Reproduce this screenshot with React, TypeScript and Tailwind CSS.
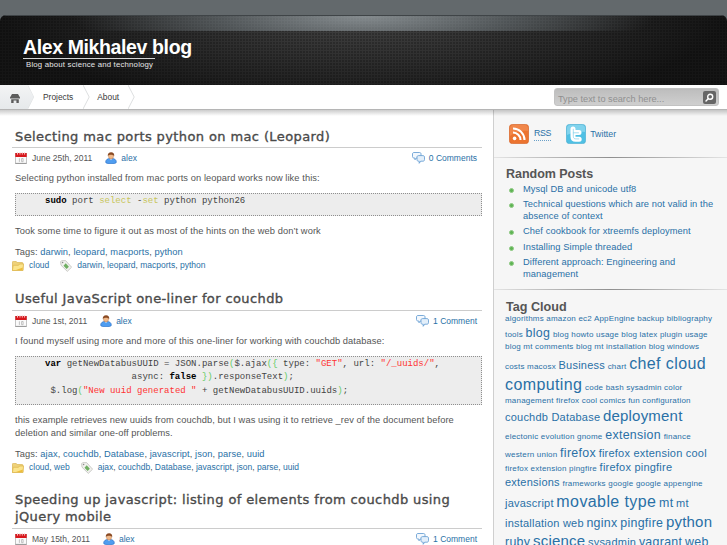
import type { ReactNode } from 'react';

type Size = 'xs' | 'md' | 'lg' | 'xl' | 'xxl';

interface Tag {
  text: string;
  size: Size;
}

const tagSizes: Record<Size, string> = {
  xs: 'text-[8px] tracking-[0.2px]',
  md: 'text-[11px] tracking-[0.22px]',
  lg: 'text-[12.4px] tracking-[0.3px]',
  xl: 'text-[15px] tracking-[0.2px]',
  xxl: 'text-[16px] tracking-[0.4px]',
};

const tagRows: { offset: string; tags: Tag[] }[] = [
  { offset: 'mt-0', tags: [{ text: 'algorithms amazon ec2 AppEngine backup bibliography', size: 'xs' }] },
  {
    offset: 'mt-1',
    tags: [
      { text: 'tools', size: 'xs' },
      { text: 'blog', size: 'lg' },
      { text: 'blog howto usage blog latex plugin usage', size: 'xs' },
    ],
  },
  { offset: 'mt-0', tags: [{ text: 'blog mt comments blog mt installation blog windows', size: 'xs' }] },
  {
    offset: 'mt-2',
    tags: [
      { text: 'costs macosx', size: 'xs' },
      { text: 'Business', size: 'md' },
      { text: 'chart', size: 'xs' },
      { text: 'chef cloud', size: 'xxl' },
    ],
  },
  {
    offset: 'mt-[9px]',
    tags: [
      { text: 'computing', size: 'xxl' },
      { text: 'code bash sysadmin color', size: 'xs' },
    ],
  },
  { offset: 'mt-px', tags: [{ text: 'management firefox cool comics fun configuration', size: 'xs' }] },
  {
    offset: 'mt-1.5',
    tags: [
      { text: 'couchdb Database', size: 'md' },
      { text: 'deployment', size: 'xl' },
    ],
  },
  {
    offset: 'mt-1.5',
    tags: [
      { text: 'electonic evolution gnome', size: 'xs' },
      { text: 'extension', size: 'lg' },
      { text: 'finance', size: 'xs' },
    ],
  },
  {
    offset: 'mt-1.5',
    tags: [
      { text: 'western union', size: 'xs' },
      { text: 'firefox', size: 'lg' },
      { text: 'firefox extension cool', size: 'md' },
    ],
  },
  {
    offset: 'mt-0.5',
    tags: [
      { text: 'firefox extension pingfire', size: 'xs' },
      { text: 'firefox pingfire', size: 'md' },
    ],
  },
  {
    offset: 'mt-[3px]',
    tags: [
      { text: 'extensions', size: 'md' },
      { text: 'frameworks google google appengine', size: 'xs' },
    ],
  },
  {
    offset: 'mt-[9px]',
    tags: [
      { text: 'javascript', size: 'md' },
      { text: 'movable type', size: 'xxl' },
      { text: 'mt', size: 'lg' },
      { text: 'mt', size: 'md' },
    ],
  },
  {
    offset: 'mt-2',
    tags: [
      { text: 'installation web', size: 'md' },
      { text: 'nginx', size: 'lg' },
      { text: 'pingfire', size: 'lg' },
      { text: 'python', size: 'xl' },
    ],
  },
  {
    offset: 'mt-[7px]',
    tags: [
      { text: 'ruby', size: 'lg' },
      { text: 'science', size: 'xl' },
      { text: 'sysadmin', size: 'md' },
      { text: 'vagrant', size: 'lg' },
      { text: 'web', size: 'lg' },
    ],
  },
];

const randomPosts = [
  ['Mysql DB and unicode utf8'],
  ['Technical questions which are not valid in the', 'absence of context'],
  ['Chef cookbook for xtreemfs deployment'],
  ['Installing Simple threaded'],
  ['Different approach: Engineering and', 'management'],
];

function HomeIcon() {
  return (
    <svg className="mt-0.5 h-[9px] w-[10px]" viewBox="0 0 10 9">
      <path d="M2 0h6l2 3.600v.9H0v-.9zM1.200 5.200h7.600V9H6.400V6.400H3.600V9H1.200z" fill="#5c5c5c" />
    </svg>
  );
}

function CalendarIcon() {
  return (
    <svg className="h-3 w-3 shrink-0" viewBox="0 0 12 12">
      <rect x="0.5" y="1.5" width="11" height="10" fill="#fafafa" stroke="#b5b5b5" strokeWidth="0.8" />
      <rect x="0.3" y="1" width="11.4" height="4" fill="#d8171c" />
      <path d="M2.5 0v2.6M5 0v2.6M7.3 0v2.6M9.6 0v2.6" stroke="#f4d5d5" strokeWidth="0.9" />
      <path d="M4.4 6.3v3.6M6.6 6.5h1.5v3.2H6.6z" fill="none" stroke="#b4b4b4" strokeWidth="0.8" />
      <path d="M0.5 11.4h11" stroke="#8b8b8b" strokeWidth="0.8" />
    </svg>
  );
}

function UserIcon() {
  return (
    <svg className="h-3 w-3 shrink-0" viewBox="0 0 12 12">
      <path d="M.6 10.2C.6 7.8 2.6 6.2 6 6.2s5.4 1.6 5.4 4c0 1-2.4 1.5-5.4 1.5S.6 11.2.6 10.2z" fill="#4f9df0" stroke="#2c6fc4" strokeWidth="0.6" />
      <path d="M4.5 6.5 6 8.3 7.5 6.5z" fill="#cfe6ff" />
      <ellipse cx="6" cy="4.3" rx="2.5" ry="2.7" fill="#f0b98a" stroke="#a9683b" strokeWidth="0.4" />
      <path d="M2.8 4.2C2.5 1.5 4 .2 6.1.2s3.5 1.4 3.1 4C8.5 3.3 7.5 2.7 6 2.8c-1.5 0-2.5.5-3.2 1.4z" fill="#8a4a22" />
    </svg>
  );
}

function CommentsIcon() {
  return (
    <svg className="h-3 w-[13px] shrink-0" viewBox="0 0 13 12" fill="#f3f8fd" stroke="#5b97cf" strokeWidth="0.8">
      <path d="M2 .5h5.5C8.500.5 9 1.100 9 2v2.500C9 5.400 8.500 6 7.500 6H4.300L3 7.800 2.800 6H2C1 6 .5 5.400.5 4.500V2C.5 1.100 1 .5 2 .5z" />
      <path d="M6.500 3.600h4.400c1 0 1.600.6 1.600 1.500v2.600c0 .9-.6 1.500-1.600 1.500H8.700L7.200 11.300V9.200h-.7C5.500 9.200 5 8.600 5 7.700V5.100c0-.9.5-1.500 1.500-1.500z" fill="#e3effa" />
    </svg>
  );
}

function FolderIcon() {
  return (
    <svg className="h-[10px] w-3 shrink-0" viewBox="0 0 12 10">
      <path d="M.4 1.2C.4.7.7.4 1.2.4h3l1 1.2h5c.5 0 .8.3.8.8v7H.4z" fill="#efd27a" stroke="#d9b24e" strokeWidth="0.7" />
      <path d="M.4 9.5 1.2 4.3h5.3l1-1.3h4.1l-.8 6.5z" fill="#fbe48c" stroke="#dcb64d" strokeWidth="0.7" />
      <path d="M4 9h6.5l.3-2.5z" fill="#edbd3c" />
    </svg>
  );
}

function TagIcon() {
  return (
    <svg className="h-3 w-3 shrink-0" viewBox="0 0 12 12">
      <path d="M.6 1.8 1.6.7l4-.1 6 6.6-4.3 4.2L1 5.2z" fill="#f1f1ee" stroke="#b9b9b4" strokeWidth="0.7" />
      <path d="M5.7 3.3 8.9 6.7 6.6 9 3.5 5.7z" fill="#6fae62" />
      <circle cx="2.6" cy="2.5" r="0.8" fill="#8c8c8c" />
    </svg>
  );
}

function RssIcon() {
  return (
    <svg className="h-5 w-5 shrink-0" viewBox="0 0 20 20">
      <rect x="0.4" y="0.4" width="19.2" height="19.2" rx="3.2" fill="#ec7430" stroke="#d96a2f" strokeWidth="0.8" />
      <path d="M1 4C1 2 2 1 4 1h12c2 0 3 1 3 3v3C13 6 6 8 1 12z" fill="#f59a63" opacity="0.5" />
      <circle cx="5.6" cy="14.4" r="1.8" fill="#fff" />
      <path d="M4 8.5a7.5 7.5 0 0 1 7.5 7.5M4 4.5A11.5 11.5 0 0 1 15.5 16" fill="none" stroke="#fff" strokeWidth="2.1" />
    </svg>
  );
}

function TwitterIcon() {
  return (
    <svg className="h-5 w-5 shrink-0" viewBox="0 0 20 20">
      <rect x="0.4" y="0.4" width="19.2" height="19.2" rx="3.2" fill="#4fc0e4" stroke="#55b4d4" strokeWidth="0.8" />
      <path d="M1 4C1 2 2 1 4 1h12c2 0 3 1 3 3v4C13 7 6 8 1 11z" fill="#a2e0f3" opacity="0.6" />
      <path
        d="M7 5v7.7c0 1.7.9 2.6 2.6 2.6h3.6M7 8.6h6"
        fill="none"
        stroke="#fff"
        strokeWidth="5"
        strokeLinecap="round"
        strokeLinejoin="round"
      />
      <path d="M7.300 5.200v7c0 1.800.9 2.700 2.500 2.700h3M7.300 8.800h5.200" fill="none" stroke="#7fd0ea" strokeWidth="0.7" strokeLinecap="round" />
    </svg>
  );
}

function Chevron() {
  return (
    <svg className="h-6 w-[7px] shrink-0" viewBox="0 0 7 24">
      <path d="M0 0 6.2 12 0 24" fill="none" stroke="#d9dbdd" strokeWidth="0.9" />
    </svg>
  );
}

function A({ children }: { children: ReactNode }) {
  return <a className="text-[#2970a6]">{children}</a>;
}

function Links({ items }: { items: string[] }) {
  return (
    <>
      {items.map((item, i) => (
        <span key={item}>
          {i > 0 && ', '}
          <A>{item}</A>
        </span>
      ))}
    </>
  );
}

function PostMeta({ date, comments }: { date: string; comments: string }) {
  return (
    <div className="flex h-5 items-center pr-[5px] pl-[3px] text-[8.5px] tracking-normal">
      <CalendarIcon />
      <span className="ml-[5px]">{date}</span>
      <span className="ml-[13px] flex items-center gap-1">
        <UserIcon />
        <A>alex</A>
      </span>
      <span className="ml-auto flex items-center gap-1">
        <CommentsIcon />
        <A>{comments}</A>
      </span>
    </div>
  );
}

function PostFooter({ categories, tags }: { categories: string[]; tags: string[] }) {
  return (
    <div className="flex h-[13px] items-center text-[8.5px] tracking-normal">
      <FolderIcon />
      <span className="ml-[5px]">
        <Links items={categories} />
      </span>
      <span className="ml-[11px] flex items-center gap-[5px]">
        <TagIcon />
        <span>
          <Links items={tags} />
        </span>
      </span>
    </div>
  );
}

function PostTitle({ children, className = '' }: { children: ReactNode; className?: string }) {
  return (
    <h2
      className={`border-b border-[#cccccc] pl-[3px] font-['DejaVu_Sans'] text-[13px] tracking-[0.39px] text-[#4a4a4a] [-webkit-text-stroke:0.35px_#4a4a4a] ${className}`}
    >
      {children}
    </h2>
  );
}

function Code({ children, className = '' }: { children: ReactNode; className?: string }) {
  return (
    <pre
      className={`ml-[3px] overflow-hidden border border-dotted border-[#8f8f8f] bg-[#ededed] pl-[29px] font-['Liberation_Mono'] text-[9.03px] leading-[13.3px] tracking-normal text-[#444] ${className}`}
    >
      {children}
    </pre>
  );
}

function Paren({ children }: { children: ReactNode }) {
  return <span className="text-[#66cc66]">{children}</span>;
}

function Str({ children }: { children: ReactNode }) {
  return <span className="text-[#ff3333]">{children}</span>;
}

function Divider() {
  return <div className="h-px bg-linear-to-r from-[#e4e4e4] via-[#8f8f8f] to-[#e4e4e4]" />;
}

function Header() {
  return (
    <header className="h-[85px] bg-[#63696c] pt-[15px]">
      <div className="h-[70px] overflow-hidden rounded-t-[6px] bg-[#141414] bg-[radial-gradient(circle_at_1px_1px,rgba(0,0,0,0.3)_0.6px,transparent_1px),radial-gradient(ellipse_360px_95px_at_50%_0,#454545,#151515)] bg-[size:3px_3px,100%_100%]">
        <div className="h-4 border-t border-[#3f4447] bg-[radial-gradient(ellipse_290px_50px_at_50%_0,rgba(150,158,162,0.8),rgba(120,130,135,0.5)_50%,transparent)]" />
        <div className="pt-[6px] pl-[23px]">
          <h1 className="text-[19.5px] leading-5 font-bold tracking-[-0.38px] text-white">Alex Mikhalev blog</h1>
          <p className="mt-px w-[132px] border-t border-[#d5d5d5] pl-[3px] text-[7.8px] leading-[11px] tracking-[0.19px] whitespace-nowrap text-[#e6e6e6]">
            Blog about science and technology
          </p>
        </div>
      </div>
    </header>
  );
}

function Nav() {
  return (
    <nav className="flex h-[25px] items-center border-b border-[#b5b5b5] bg-white text-[8.4px] text-[#3b3b3b]">
      <div className="flex h-6 items-center bg-linear-to-b from-[#f3f4f5] to-[#e6e9eb] pl-[10px] [clip-path:polygon(0_0,28px_0,34px_50%,28px_100%,0_100%)]">
        <HomeIcon />
        <span className="ml-2">
          <Chevron />
        </span>
      </div>
      <span className="ml-2">Projects</span>
      <span className="ml-[10px] flex">
        <Chevron />
      </span>
      <span className="ml-[7px]">About</span>
      <span className="ml-[9px] flex">
        <Chevron />
      </span>
      <div className="mr-2 ml-auto flex h-[18px] w-[165px] items-center justify-between rounded-[3px] border border-[#c2c2c2] bg-linear-to-b from-[#bdbdbd] to-[#cfcfcf] pr-[2px] pl-[3px]">
        <span className="pt-[3px] text-[9.2px] leading-3 text-[#909090]">Type text to search here...</span>
        <span className="flex h-[13px] w-[13px] items-center justify-center rounded-[2px] bg-[#666]">
          <svg className="h-[9px] w-[9px]" viewBox="0 0 9 9" fill="none" stroke="#fff" strokeWidth="1.4" strokeLinecap="round">
            <circle cx="5.2" cy="3.7" r="2.5" />
            <path d="M3.2 5.7 1 8" />
          </svg>
        </span>
      </div>
    </nav>
  );
}

function Sidebar() {
  return (
    <aside className="w-[234px] shrink-0 overflow-hidden border-l border-[#cfcfcf] bg-[#f6f6f6] text-[#2970a6]">
      <div className="flex h-[47px] items-center pl-[15px]">
        <RssIcon />
        <span className="ml-[5px] border-b border-dotted border-[#6aa0c8] pt-px text-[8.8px] leading-[13px] tracking-[-0.3px]">RSS</span>
        <span className="w-[15px]" />
        <TwitterIcon />
        <span className="ml-1 text-[8.8px] leading-[14px]">Twitter</span>
      </div>
      <Divider />
      <h3 className="mt-[9px] pl-[12px] text-[12.5px] leading-3.5 font-bold tracking-[-0.03px] text-[#555]">Random Posts</h3>
      <ul className="mt-[3px] space-y-[3.7px] pl-[15px]">
        {randomPosts.map((lines) => (
          <li key={lines[0]} className="flex text-[9.3px] leading-[11.7px] tracking-[0.09px] whitespace-nowrap">
            <span className="mt-[4px] mr-[9px] h-[5px] w-[5px] rounded-full border border-[#8fca84] bg-[#5fb454]" />
            <span>
              {lines.map((line) => (
                <span key={line} className="block">
                  {line}
                </span>
              ))}
            </span>
          </li>
        ))}
      </ul>
      <div className="mt-[8px]">
        <Divider />
      </div>
      <h3 className="mt-[10px] pl-[12px] text-[12.6px] leading-3.5 font-bold text-[#555]">Tag Cloud</h3>
      <div className="-mt-[2px] pl-[11px]">
        {tagRows.map(({ offset, tags }, i) => (
          <div key={i} className={`h-3 text-[9px] leading-3 whitespace-nowrap ${offset}`}>
            {tags.map(({ text, size }, j) => (
              <a key={j} className={`mr-[2.7px] leading-[0] ${tagSizes[size]}`}>
                {text}
              </a>
            ))}
          </div>
        ))}
      </div>
    </aside>
  );
}

export default function App() {
  return (
    <div className="flex h-[545px] w-[727px] flex-col overflow-hidden bg-white font-['Liberation_Sans',sans-serif] text-[#555]">
      <Header />
      <Nav />
      <div className="relative flex min-h-0 flex-1">
        <div className="absolute inset-x-0 top-0 h-1.5 bg-linear-to-b from-black/20 to-transparent" />
        <main className="w-[493px] pt-4 pr-[11px] pl-3 text-[9.3px] leading-[13px] tracking-[0.075px] whitespace-nowrap">
          <article>
            <PostTitle className="h-[22px] leading-[21px]">Selecting mac ports python on mac (Leopard)</PostTitle>
            <PostMeta date="June 25th, 2011" comments="0 Comments" />
            <p className="mt-1 pl-[3px]">Selecting python installed from mac ports on leopard works now like this:</p>
            <Code className="mt-2 h-[23px]">
              <b className="text-black">sudo</b> port <span className="text-[#c8c55a]">select</span> -
              <span className="text-[#c8c55a]">set</span> python python26
            </Code>
            <p className="mt-[9px] pl-[3px]">Took some time to figure it out as most of the hints on the web don’t work</p>
            <p className="mt-2 pl-[3px]">
              Tags: <Links items={['darwin', 'leopard', 'macports', 'python']} />
            </p>
            <PostFooter categories={['cloud']} tags={['darwin', 'leopard', 'macports', 'python']} />
          </article>

          <article className="mt-4">
            <PostTitle className="h-[23px] leading-[21px]">Useful JavaScript one-liner for couchdb</PostTitle>
            <PostMeta date="June 1st, 2011" comments="1 Comment" />
            <p className="mt-1 pl-[3px]">I found myself using more and more of this one-liner for working with couchdb database:</p>
            <Code className="mt-2 h-[49px]">
              <b className="text-black">var</b> getNewDatabusUUID = JSON.parse<Paren>(</Paren>$.ajax<Paren>{'({'}</Paren> type: <Str>"GET"</Str>, url:{' '}
              <Str>"/_uuids/"</Str>,{'\n'}
              {'                '}async: <b className="text-black">false</b> <Paren>{'})'}</Paren>.responseText<Paren>)</Paren>;{'\n'}
              {' '}$.log<Paren>(</Paren><Str>"New uuid generated "</Str> + getNewDatabusUUID.uuids<Paren>)</Paren>;
            </Code>
            <p className="mt-[9px] pl-[3px]">
              this example retrieves new uuids from couchdb, but I was using it to retrieve _rev of the document before
              <br />
              deletion and similar one-off problems.
            </p>
            <p className="mt-2 pl-[3px]">
              Tags: <Links items={['ajax', 'couchdb', 'Database', 'javascript', 'json', 'parse', 'uuid']} />
            </p>
            <PostFooter categories={['cloud', 'web']} tags={['ajax', 'couchdb', 'Database', 'javascript', 'json', 'parse', 'uuid']} />
          </article>

          <article className="mt-[18px]">
            <PostTitle className="h-[37px] leading-[16.5px]">
              Speeding up javascript: listing of elements from couchdb using
              <br />
              jQuery mobile
            </PostTitle>
            <PostMeta date="May 15th, 2011" comments="1 Comment" />
          </article>
        </main>
        <Sidebar />
      </div>
    </div>
  );
}
